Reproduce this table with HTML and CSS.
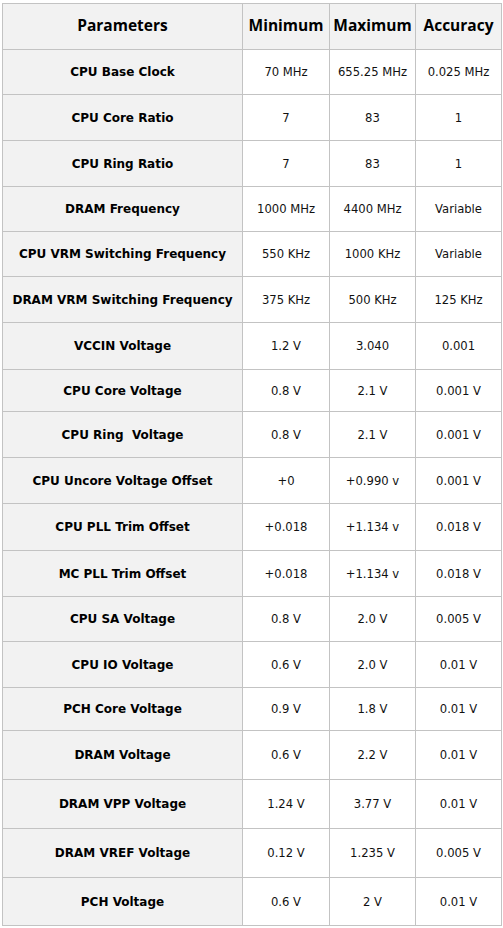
FILE: index.html
```html
<!DOCTYPE html>
<html>
<head>
<meta charset="utf-8">
<link rel="stylesheet" href="styles.css">
</head>
<body>
<table class="spec">
  <colgroup>
    <col class="c-param"><col class="c-min"><col class="c-max"><col class="c-acc">
  </colgroup>
  <thead>
    <tr><th>Parameters</th><th>Minimum</th><th>Maximum</th><th>Accuracy</th></tr>
  </thead>
  <tbody>
    <tr><td>CPU Base Clock</td><td>70 MHz</td><td>655.25 MHz</td><td>0.025 MHz</td></tr>
    <tr><td>CPU Core Ratio</td><td>7</td><td>83</td><td>1</td></tr>
    <tr><td>CPU Ring Ratio</td><td>7</td><td>83</td><td>1</td></tr>
    <tr><td>DRAM Frequency</td><td>1000 MHz</td><td>4400 MHz</td><td>Variable</td></tr>
    <tr><td>CPU VRM Switching Frequency</td><td>550 KHz</td><td>1000 KHz</td><td>Variable</td></tr>
    <tr><td>DRAM VRM Switching Frequency</td><td>375 KHz</td><td>500 KHz</td><td>125 KHz</td></tr>
    <tr><td>VCCIN Voltage</td><td>1.2 V</td><td>3.040</td><td>0.001</td></tr>
    <tr><td>CPU Core Voltage</td><td>0.8 V</td><td>2.1 V</td><td>0.001 V</td></tr>
    <tr><td>CPU Ring &nbsp;Voltage</td><td>0.8 V</td><td>2.1 V</td><td>0.001 V</td></tr>
    <tr><td>CPU Uncore Voltage Offset</td><td>+0</td><td>+0.990 v</td><td>0.001 V</td></tr>
    <tr><td>CPU PLL Trim Offset</td><td>+0.018</td><td>+1.134 v</td><td>0.018 V</td></tr>
    <tr><td>MC PLL Trim Offset</td><td>+0.018</td><td>+1.134 v</td><td>0.018 V</td></tr>
    <tr><td>CPU SA Voltage</td><td>0.8 V</td><td>2.0 V</td><td>0.005 V</td></tr>
    <tr><td>CPU IO Voltage</td><td>0.6 V</td><td>2.0 V</td><td>0.01 V</td></tr>
    <tr><td>PCH Core Voltage</td><td>0.9 V</td><td>1.8 V</td><td>0.01 V</td></tr>
    <tr><td>DRAM Voltage</td><td>0.6 V</td><td>2.2 V</td><td>0.01 V</td></tr>
    <tr><td>DRAM VPP Voltage</td><td>1.24 V</td><td>3.77 V</td><td>0.01 V</td></tr>
    <tr><td>DRAM VREF Voltage</td><td>0.12 V</td><td>1.235 V</td><td>0.005 V</td></tr>
    <tr><td>PCH Voltage</td><td>0.6 V</td><td>2 V</td><td>0.01 V</td></tr>
  </tbody>
</table>
</body>
</html>
```

FILE: styles.css
```css
html, body {
  margin: 0;
  padding: 0;
  background: #ffffff;
}
body {
  padding: 3px 0 0 2px;
}
.spec {
  border-collapse: collapse;
  table-layout: fixed;
  width: 499px;
  color: #111;
}
.c-param { width: 240px; }
.c-min { width: 87px; }
.c-max { width: 86px; }
.c-acc { width: 86px; }
.spec th, .spec td {
  border: 1px solid #c3c3c3;
  text-align: center;
  vertical-align: middle;
  padding: 0;
  white-space: nowrap;
  overflow: hidden;
}
.spec th {
  background: #f2f2f2;
  font-family: "Open Sans", "Noto Sans", sans-serif;
  font-weight: 700;
  font-size: 15.5px;
  height: 42px;
  padding-bottom: 3px;
  color: #000;
}
.spec td {
  font-family: "DejaVu Sans", sans-serif;
  font-size: 11.6px;
}
.spec td:first-child {
  background: #f2f2f2;
  font-weight: 700;
  font-size: 12px;
  color: #000;
}
.spec tbody tr { height: 46px; }
.spec tbody tr:nth-child(1) { height: 45px; }
.spec tbody tr:nth-child(4) { height: 45px; }
.spec tbody tr:nth-child(5) { height: 45px; }
.spec tbody tr:nth-child(7) { height: 47px; }
.spec tbody tr:nth-child(8) { height: 42px; }
.spec tbody tr:nth-child(11) { height: 47px; }
.spec tbody tr:nth-child(13) { height: 45px; }
.spec tbody tr:nth-child(15) { height: 43px; }
.spec tbody tr:nth-child(16) { height: 49px; }
.spec tbody tr:nth-child(17) { height: 49px; }
.spec tbody tr:nth-child(18) { height: 49px; }
.spec tbody tr:nth-child(19) { height: 48px; }
```
